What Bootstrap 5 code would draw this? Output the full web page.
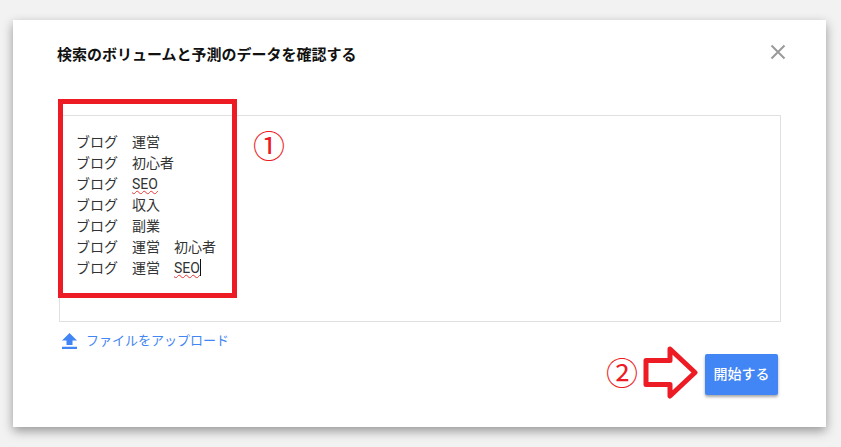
<!DOCTYPE html>
<html lang="ja">
<head>
<meta charset="utf-8">
<title>検索のボリュームと予測のデータを確認する</title>
<link href="https://cdn.jsdelivr.net/npm/bootstrap@5.3.0/dist/css/bootstrap.min.css" rel="stylesheet">
<style>
html,body{height:100%;}
body{background:#f2f2f2;overflow:hidden;font-family:Roboto,"Noto Sans CJK JP",sans-serif;padding:20px 15px 20px 13px;}
.dlg{width:813px;height:407px;background:#fff;position:relative;border:0;border-radius:0;box-shadow:0 4px 10px rgba(0,0,0,.38);padding:25px 45px 0 46px;}
.dlg-title{font-size:15px;font-weight:700;line-height:20px;color:#111;margin:0 0 0 -2px;}
.dlg-close{color:#9a9a9a;line-height:0;position:absolute;right:40px;top:24px;background:none;border:0;padding:0;}
.kw-box{height:207px;width:722px;border:1px solid #e0e0e0;margin-top:50px;padding:15.5px 16px 0 16px;font-size:14px;line-height:21px;color:#333;}
.kw-line{white-space:pre;}
.sp{text-decoration:underline wavy #e53935 1px;text-underline-offset:1px;}
.caret-bar{display:inline-block;width:1px;height:17px;background:#111;vertical-align:-3px;}
.upl{color:#4285f4;font-size:13px;line-height:20px;margin-top:9px;gap:9px;padding-left:3px;}
.go-row{margin-top:3px;margin-right:3px;}
.go-btn{width:73px;height:41px;background:#4285f4;color:#fff;font-size:14px;font-weight:500;padding:0;border:0;border-radius:2px;box-shadow:0 2px 3px rgba(0,0,0,.35);}
.go-btn:hover{background:#4285f4;color:#fff;}
.mark-box{position:absolute;left:45px;top:79px;width:179px;height:199px;border:5px solid #ed1c24;pointer-events:none;}
.num{position:absolute;color:#ed1c24;font-size:32px;line-height:32px;font-family:"Noto Sans CJK JP",sans-serif;font-weight:400;}
.n1{left:240px;top:108px;}
.n2{left:593px;top:335px;}
.arrow{position:absolute;left:629px;top:326px;}
</style>
</head>
<body>
<div class="card dlg">
  <h5 class="dlg-title">検索のボリュームと予測のデータを確認する</h5>
  <button class="dlg-close" type="button" aria-label="閉じる">
    <svg width="16" height="16" viewBox="0 0 16 16"><path d="M1.5 1.5 14.5 14.5M14.5 1.5 1.5 14.5" stroke="currentColor" stroke-width="2" fill="none"/></svg>
  </button>
  <div class="kw-box">
    <div class="kw-line">ブログ　運営</div>
    <div class="kw-line">ブログ　初心者</div>
    <div class="kw-line">ブログ　<span class="sp">SEO</span></div>
    <div class="kw-line">ブログ　収入</div>
    <div class="kw-line">ブログ　副業</div>
    <div class="kw-line">ブログ　運営　初心者</div>
    <div class="kw-line">ブログ　運営　<span class="sp">SEO</span><span class="caret-bar"></span></div>
  </div>
  <div class="upl d-flex align-items-center">
    <svg width="15" height="16" viewBox="0 0 15 16"><path d="M7.5 0 15 7.5H10.5V12H4.5V7.5H0ZM0 13.7H15V16H0Z" fill="currentColor"/></svg>
    <span>ファイルをアップロード</span>
  </div>
  <div class="go-row d-flex justify-content-end">
    <button class="btn go-btn" type="button">開始する</button>
  </div>
  <div class="mark-box"></div>
  <div class="num n1">①</div>
  <div class="num n2">②</div>
  <svg class="arrow" width="56" height="56" viewBox="0 0 56 56"><path d="M4 14.5H28V3L53 26.5 28 50V38.5H4Z" fill="#fff" stroke="#ed1c24" stroke-width="5" stroke-linejoin="round"/></svg>
</div>
<script src="https://cdn.jsdelivr.net/npm/bootstrap@5.3.0/dist/js/bootstrap.bundle.min.js"></script>
</body>
</html>
